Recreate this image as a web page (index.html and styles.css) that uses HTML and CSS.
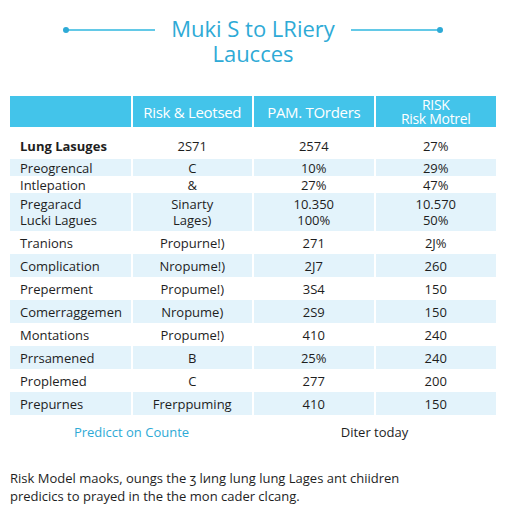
FILE: index.html
```html
<!DOCTYPE html>
<html lang="en">
<head>
    <meta charset="UTF-8">
    <meta name="viewport" content="width=device-width, initial-scale=1.0">
    <title>Muki S to LRiery Laucces</title>
    <link rel="stylesheet" href="styles.css">
</head>
<body>
    <div class="page">
        <header class="title-block">
            <span class="rule rule-left"></span>
            <h1>Muki S to LRiery<br>Laucces</h1>
            <span class="rule rule-right"></span>
        </header>

        <table class="risk-table">
            <thead>
                <tr>
                    <th></th>
                    <th>Risk &amp; Leotsed</th>
                    <th>PAM. TOrders</th>
                    <th class="two-line"><span>RISK</span><span>Risk Motrel</span></th>
                </tr>
            </thead>
            <tbody>
                <tr class="first">
                    <td class="name bold">Lung Lasuges</td>
                    <td>2S71</td>
                    <td>2574</td>
                    <td>27%</td>
                </tr>
                <tr class="shade small">
                    <td class="name">Preogrencal</td>
                    <td>C</td>
                    <td>10%</td>
                    <td>29%</td>
                </tr>
                <tr class="small">
                    <td class="name">Intlepation</td>
                    <td>&amp;</td>
                    <td>27%</td>
                    <td>47%</td>
                </tr>
                <tr class="shade double">
                    <td class="name">Pregaracd<br>Lucki Lagues</td>
                    <td>Sinarty<br>Lages)</td>
                    <td>10.350<br>100%</td>
                    <td>10.570<br>50%</td>
                </tr>
                <tr>
                    <td class="name">Tranions</td>
                    <td>Propurne!)</td>
                    <td>271</td>
                    <td>2J%</td>
                </tr>
                <tr class="shade">
                    <td class="name">Complication</td>
                    <td>Nropume!)</td>
                    <td>2J7</td>
                    <td>260</td>
                </tr>
                <tr>
                    <td class="name">Preperment</td>
                    <td>Propume!)</td>
                    <td>3S4</td>
                    <td>150</td>
                </tr>
                <tr class="shade">
                    <td class="name">Comerraggemen</td>
                    <td>Nropume)</td>
                    <td>2S9</td>
                    <td>150</td>
                </tr>
                <tr>
                    <td class="name">Montations</td>
                    <td>Propume!)</td>
                    <td>410</td>
                    <td>240</td>
                </tr>
                <tr class="shade">
                    <td class="name">Prrsamened</td>
                    <td>B</td>
                    <td>25%</td>
                    <td>240</td>
                </tr>
                <tr>
                    <td class="name">Proplemed</td>
                    <td>C</td>
                    <td>277</td>
                    <td>200</td>
                </tr>
                <tr class="shade">
                    <td class="name">Prepurnes</td>
                    <td>Frerppuming</td>
                    <td>410</td>
                    <td>150</td>
                </tr>
            </tbody>
        </table>

        <div class="table-footer">
            <a class="predict" href="#">Predicct on Counte</a>
            <span class="date">Diter today</span>
        </div>

        <p class="note">Risk Model maoks, oungs the ʒ lиng lung lung Lages ant chiidren predicics to prayed in the the mon cader clcang.</p>
    </div>
</body>
</html>
```

FILE: styles.css
```css
:root {
    --accent: #2eaad6;
    --header-bg: #43c4ea;
    --row-shade: #e3f3fb;
    --text-color: #1e1e1e;
}

body {
    margin: 0;
    background: #fff;
    font-family: "Open Sans", "Noto Sans", sans-serif;
    color: var(--text-color);
}

.page {
    padding: 16px 16px 0 10px;
}

/* title with the two thin rules */
.title-block {
    display: flex;
    justify-content: center;
    align-items: flex-start;
    gap: 16px;
}

.title-block h1 {
    margin: 0;
    font-size: 22px;
    font-weight: 400;
    line-height: 25px;
    text-align: center;
    color: var(--accent);
}

.rule {
    position: relative;
    width: 89px;
    height: 1.5px;
    margin-top: 13px;
    background: #63c9e7;
}

.rule::after {
    content: "";
    position: absolute;
    top: -2.5px;
    width: 6px;
    height: 6px;
    border-radius: 50%;
    background: var(--accent);
}

.rule-left::after { left: -3px; }
.rule-right::after { right: -3px; }

/* table */
.risk-table {
    width: 486px;
    margin-top: 30px;
    border-collapse: collapse;
    table-layout: fixed;
    font-size: 13px;
}

.risk-table th {
    height: 31px;
    padding: 0;
    background: var(--header-bg);
    color: #fff;
    font-size: 15px;
    font-weight: 400;
    border-left: 2px solid #fff;
    letter-spacing: -0.3px;
}

.risk-table th:first-child { border-left: none; }

.risk-table th.two-line span {
    display: block;
    font-size: 14px;
    line-height: 15px;
}

.risk-table th.two-line span:first-child {
    line-height: 13px;
}

.risk-table td {
    height: 23px;
    padding: 0;
    text-align: center;
    border-left: 2px solid #fff;
    line-height: 16px;
}

.risk-table td:first-child { border-left: none; }

.risk-table td.name {
    text-align: left;
    padding-left: 10px;
}

.risk-table .bold { font-weight: 700; }

.risk-table tr.first td {
    height: 32px;
    padding-top: 6px;
    box-sizing: border-box;
}

.risk-table tr.small td { height: 17px; }

.risk-table tr.double td {
    height: 38px;
}

.risk-table tr.shade td { background: var(--row-shade); }

.table-footer {
    display: grid;
    grid-template-columns: 243px 243px;
    margin-top: 8px;
    font-size: 13px;
    text-align: center;
}

.predict {
    color: var(--accent);
    text-decoration: none;
}

.note {
    margin: 28px 0 0;
    font-size: 13px;
    line-height: 18px;
    width: 400px;
}
```
